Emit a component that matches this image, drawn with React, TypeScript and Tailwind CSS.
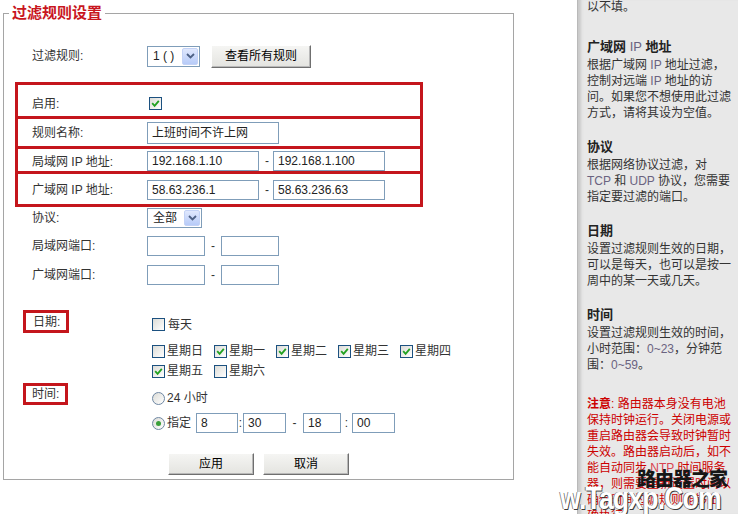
import React from "react";

function Checkbox({ checked = false }: { checked?: boolean }) {
  return (
    <span className="inline-flex h-[13px] w-[13px] shrink-0 items-center justify-center border border-[#1c5180] bg-linear-to-br from-[#dcdcd7] to-white">
      {checked && (
        <svg width="9" height="9" viewBox="0 0 9 9">
          <path d="M1.2 4.2 L3.6 6.8 L7.8 1.8" fill="none" stroke="#21a121" strokeWidth="1.8" />
        </svg>
      )}
    </span>
  );
}

function Radio({ checked = false }: { checked?: boolean }) {
  return (
    <span className="inline-flex h-[13px] w-[13px] shrink-0 items-center justify-center rounded-full border border-[#6e87a3] bg-linear-to-br from-[#dcdcd7] to-white">
      {checked && <span className="h-[5px] w-[5px] rounded-full bg-[#3a9f3a]" />}
    </span>
  );
}

function Field({ value = "", className = "" }: { value?: string; className?: string }) {
  return (
    <div className={`flex items-center border border-[#7f9db9] bg-white pl-[4px] text-[12px] text-[#222] ${className}`}>
      {value}
    </div>
  );
}

function Select({ value, className = "" }: { value: string; className?: string }) {
  return (
    <div className={`flex items-center border border-[#7f9db9] bg-white ${className}`}>
      <span className="flex-1 pl-[5px] text-[12px] text-[#222]">{value}</span>
      <span className="mr-px flex h-[calc(100%-2px)] w-[16px] items-center justify-center rounded-[2px] border border-[#c3d2f6] bg-linear-to-b from-[#e0e8fd] to-[#b7cbf8]">
        <svg width="9" height="6" viewBox="0 0 9 6">
          <path d="M1 1 L4.5 4.5 L8 1" fill="none" stroke="#4d6185" strokeWidth="1.8" />
        </svg>
      </span>
    </div>
  );
}

function Btn({ children, className = "" }: { children: React.ReactNode; className?: string }) {
  return (
    <div
      className={`flex items-center justify-center border border-t-white border-l-white border-r-[#6f6f6f] border-b-[#6f6f6f] bg-linear-to-b from-[#f5f5f3] to-[#e4e4e0] text-[12px] text-black shadow-[inset_-1px_-1px_0_#b8b8b8] ${className}`}
    >
      {children}
    </div>
  );
}

function Row({ label, children, className = "" }: { label: React.ReactNode; children: React.ReactNode; className?: string }) {
  return (
    <div className={`flex items-center ${className}`}>
      <div className="w-[143px] shrink-0 pl-[28px]">{label}</div>
      <div className="flex items-center">{children}</div>
    </div>
  );
}

function BoxRow({ label, children, className = "" }: { label: React.ReactNode; children: React.ReactNode; className?: string }) {
  return (
    <div className={`flex ${className}`}>
      <div className="w-[129px] shrink-0 pl-[14px]">{label}</div>
      <div className="flex items-center">{children}</div>
    </div>
  );
}

function L({ children }: { children: React.ReactNode }) {
  return <span className="font-normal text-[#6a6380]">{children}</span>;
}

function Day({ label, checked = false }: { label: string; checked?: boolean }) {
  return (
    <div className="flex w-[62px] items-center gap-[2px]">
      <Checkbox checked={checked} />
      <span>{label}</span>
    </div>
  );
}

export default function App() {
  return (
    <div className="relative flex h-[514px] w-[738px] overflow-hidden bg-white font-['Liberation_Sans','Noto_Sans_CJK_SC',sans-serif] text-[12px] text-[#333]">
      <div className="w-[577px] shrink-0 pl-[3px] pt-[3px]">
        <fieldset className="w-[511px] border border-[#a5a5a5] pb-[4px]">
          <legend className="ml-[5px] px-[3px] text-[15px] font-bold leading-[20px] text-[#c8161e]">过滤规则设置</legend>

          <Row label="过滤规则:" className="mt-[21px] h-[24px]">
            <Select value="1 ( )" className="h-[21px] w-[53px]" />
            <Btn className="ml-[11px] h-[23px] w-[100px]">查看所有规则</Btn>
          </Row>

          <div className="ml-[11px] mt-[14px] w-[408px] border-[3px] border-[#c4161c]">
            <BoxRow label="启用:" className="h-[31px] items-center pt-[6px]">
              <span className="pl-[2px]">
                <Checkbox checked />
              </span>
            </BoxRow>
            <div className="h-[3px] bg-[#c4161c]" />
            <BoxRow label="规则名称:" className="h-[27px] items-center">
              <Field value="上班时间不许上网" className="h-[22px] w-[132px]" />
            </BoxRow>
            <div className="h-[3px] bg-[#c4161c]" />
            <BoxRow label={<>局域网 IP 地址:</>} className="h-[22px] items-end">
              <Field value="192.168.1.10" className="h-[20px] w-[112px]" />
              <span className="w-[14px] pl-[6px]">-</span>
              <Field value="192.168.1.100" className="h-[20px] w-[112px]" />
            </BoxRow>
            <div className="h-[3px] bg-[#c4161c]" />
            <BoxRow label={<>广域网 IP 地址:</>} className="h-[30px] items-center pt-[2px]">
              <Field value="58.63.236.1" className="h-[20px] w-[112px]" />
              <span className="w-[14px] pl-[6px]">-</span>
              <Field value="58.63.236.63" className="h-[20px] w-[112px]" />
            </BoxRow>
          </div>

          <Row label="协议:" className="h-[22px]">
            <Select value="全部" className="h-[20px] w-[55px]" />
          </Row>
          <Row label="局域网端口:" className="mt-[7px] h-[20px]">
            <Field className="h-[20px] w-[58px]" />
            <span className="w-[16px] text-center">-</span>
            <Field className="h-[20px] w-[58px]" />
          </Row>
          <Row label="广域网端口:" className="mt-[9px] h-[20px]">
            <Field className="h-[20px] w-[58px]" />
            <span className="w-[16px] text-center">-</span>
            <Field className="h-[20px] w-[58px]" />
          </Row>

          <div className="mt-[25px] flex h-[23px]">
            <div className="w-[143px] shrink-0 pl-[19px]">
              <div className="flex h-[23px] w-[46px] items-center border-[3px] border-[#c4161c] pl-[7px]">日期:</div>
            </div>
            <div className="flex items-center gap-[3px] pl-[5px] pt-[6px]">
              <Checkbox />
              <span>每天</span>
            </div>
          </div>

          <div className="ml-[143px] mt-[10px] flex h-[16px] items-center pl-[5px]">
            <Day label="星期日" />
            <Day label="星期一" checked />
            <Day label="星期二" checked />
            <Day label="星期三" checked />
            <Day label="星期四" checked />
          </div>
          <div className="ml-[143px] mt-[4px] flex h-[16px] items-center pl-[5px]">
            <Day label="星期五" checked />
            <Day label="星期六" />
          </div>

          <div className="mt-[4px] flex h-[22px]">
            <div className="w-[143px] shrink-0 pl-[19px]">
              <div className="flex h-[22px] w-[45px] items-center border-[3px] border-[#c4161c] pl-[6px]">时间:</div>
            </div>
            <div className="flex items-center gap-[2px] pl-[5px] pt-[8px]">
              <Radio />
              <span>24 小时</span>
            </div>
          </div>

          <div className="ml-[143px] mt-[8px] flex h-[20px] items-center pl-[5px]">
            <Radio checked />
            <span className="ml-[2px] w-[29px]">指定</span>
            <Field value="8" className="h-[20px] w-[42px]" />
            <span className="w-[5px] text-center">:</span>
            <Field value="30" className="h-[20px] w-[43px]" />
            <span className="w-[17px] text-center">-</span>
            <Field value="18" className="h-[20px] w-[38px]" />
            <span className="w-[11px] text-center">:</span>
            <Field value="00" className="h-[20px] w-[43px]" />
          </div>

          <div className="ml-[164px] mt-[20px] flex h-[22px] gap-[9px]">
            <Btn className="h-[22px] w-[86px]">应用</Btn>
            <Btn className="h-[22px] w-[86px]">取消</Btn>
          </div>
        </fieldset>
      </div>

      <aside className="h-[514px] flex-1 border-l border-[#b9b9b9] bg-[#e8e8e8] shadow-[inset_5px_0_3px_-2px_#c9c9c9]">
        <div className="-mt-px whitespace-nowrap pl-[9px] text-[12px] leading-[16px] text-[#333]">
          <p className="mb-[22px]">以不填。</p>

          <section className="mb-[16px]">
            <h3 className="text-[13px] font-bold leading-[20px] text-[#222]">
              广域网 <L>IP</L> 地址
            </h3>
            <p>
              根据广域网 <L>IP</L> 地址过滤，
              <br />
              控制对远端 <L>IP</L> 地址的访
              <br />
              问。如果您不想使用此过滤
              <br />
              方式，请将其设为空值。
            </p>
          </section>

          <section className="mb-[16px]">
            <h3 className="text-[13px] font-bold leading-[20px] text-[#222]">协议</h3>
            <p>
              根据网络协议过滤，对
              <br />
              <L>TCP</L> 和 <L>UDP</L> 协议，您需要
              <br />
              指定要过滤的端口。
            </p>
          </section>

          <section className="mb-[16px]">
            <h3 className="text-[13px] font-bold leading-[20px] text-[#222]">日期</h3>
            <p>
              设置过滤规则生效的日期，
              <br />
              可以是每天，也可以是按一
              <br />
              周中的某一天或几天。
            </p>
          </section>

          <section className="mb-[23px]">
            <h3 className="text-[13px] font-bold leading-[20px] text-[#222]">时间</h3>
            <p>
              设置过滤规则生效的时间，
              <br />
              小时范围：<L>0~23</L>，分钟范
              <br />
              围：<L>0~59</L>。
            </p>
          </section>

          <p className="leading-[16px] text-[#cc0000]">
            <b>注意</b>: 路由器本身没有电池
            <br />
            保持时钟运行。关闭电源或
            <br />
            重启路由器会导致时钟暂时
            <br />
            失效。路由器启动后，如不
            <br />
            能自动同步 <span className="text-[#d9434f]">NTP</span> 时间服务
            <br />
            器，则需要重新设置时间以
            <br />
            <span className="leading-[12px]">确保时间过滤规则能够正</span>
            <br />
            <span className="leading-[12px]">确执行。</span>
          </p>
        </div>
      </aside>

      <div className="pointer-events-none absolute left-[637px] top-[467px] font-['Noto_Sans_CJK_SC',sans-serif] text-[19px] font-black leading-[22px] tracking-[-1px] text-[#161616]">
        路由器之家
      </div>
      <div className="pointer-events-none absolute left-[560px] top-[484px] origin-left scale-x-[0.86] font-['Liberation_Sans',sans-serif] text-[31px] font-bold leading-[30px] tracking-[-1px] text-white [text-shadow:1px_1px_0_#3a3a3a,-1px_0_0_#777]">
        w.Tagxp.Com
      </div>
    </div>
  );
}
